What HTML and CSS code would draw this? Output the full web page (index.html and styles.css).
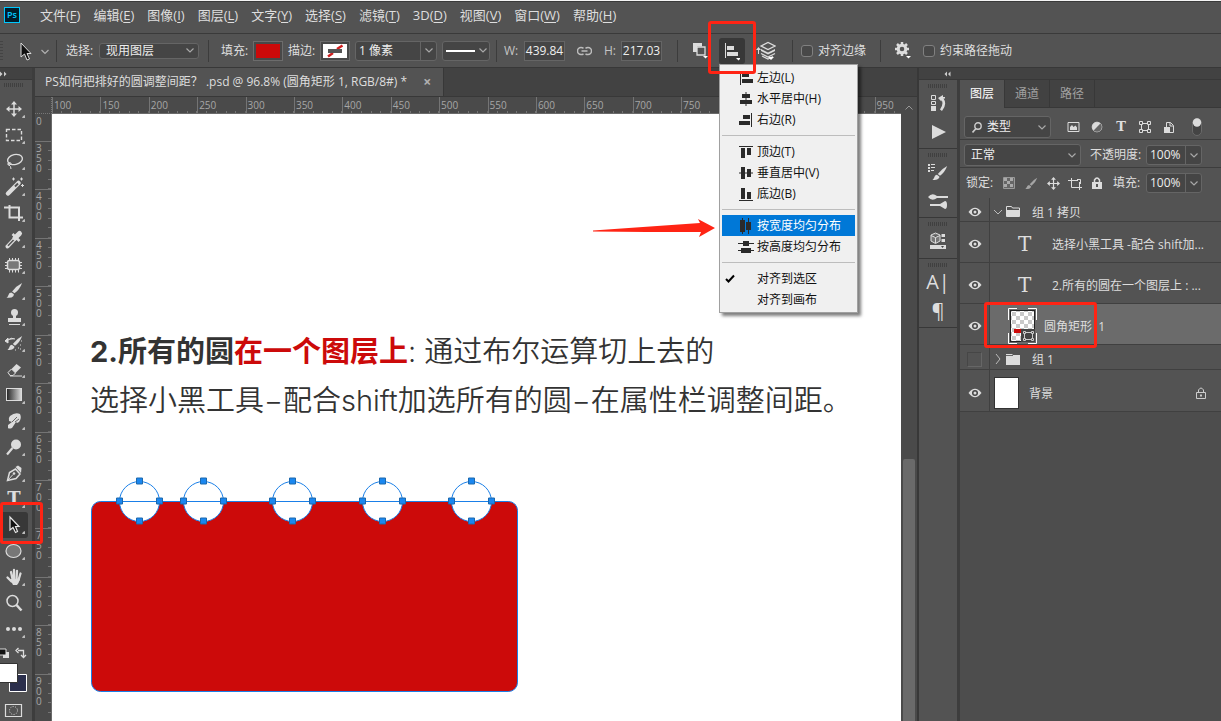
FILE: index.html
```html
<!DOCTYPE html>
<html lang="zh-CN">
<head>
<meta charset="utf-8">
<title>PS如何把排好的圆调整间距?.psd</title>
<link rel="stylesheet" href="styles.css">
</head>
<body>
<svg class="defs" aria-hidden="true">
  <symbol id="eye" viewBox="0 0 14 10"><path d="M.5 5Q7-3.400 13.500 5Q7 13.400 .5 5Z" fill="#dcdcdc"/><circle cx="7" cy="5" r="3" fill="#454545"/><circle cx="7" cy="5" r="1.500" fill="#dcdcdc"/></symbol>
  <symbol id="move" viewBox="0 0 16 16"><path d="M8 2.500V13.500M2.500 8H13.500" stroke="#dcdcdc" stroke-width="1.500"/><path d="M8 0L11 3.500H5ZM8 16L5 12.500H11ZM0 8L3.500 5V11ZM16 8L12.500 11V5Z" fill="#dcdcdc"/></symbol>
  <symbol id="brush" viewBox="0 0 18 18"><path d="M17 1Q11 4 6.500 10L9 12Q14.500 8 17 1Z" fill="#dcdcdc"/><path d="M5.500 11Q3 11.300 2.500 14Q2 15.800 .5 16.500Q5.500 17.500 7.700 15Q8.600 14 8.200 12.800Z" fill="#dcdcdc"/></symbol>
  <symbol id="chev" viewBox="0 0 8 5"><path d="M.5.5L4 4L7.500.5" fill="none" stroke="#a8a8a8" stroke-width="1.200"/></symbol>
</svg>
<div class="app">
  <nav class="menubar">
    <span class="logo">Ps</span>
    <button>文件(<u>F</u>)</button><button>编辑(<u>E</u>)</button><button>图像(<u>I</u>)</button><button>图层(<u>L</u>)</button><button>文字(<u>Y</u>)</button><button>选择(<u>S</u>)</button><button>滤镜(<u>T</u>)</button><button>3D(<u>D</u>)</button><button>视图(<u>V</u>)</button><button>窗口(<u>W</u>)</button><button>帮助(<u>H</u>)</button>
  </nav>

  <header class="options">
    <div class="group g-tool">
      <span class="vgrip"></span>
      <button class="icon" aria-label="路径选择工具"><svg width="32" height="20" viewBox="0 0 32 20"><path d="M3 2V16L6.500 13L9 19L11.500 18L9 12.500H13Z" fill="#111" stroke="#dcdcdc"/><path d="M23.500 9L27 12.500L30.500 9" fill="none" stroke="#b0b0b0" stroke-width="1.200"/></svg></button>
    </div>
    <div class="group g-select">
      <label for="scope">选择:</label>
      <select id="scope" class="box scope"><option>现用图层</option></select>
    </div>
    <div class="group g-style">
      <label for="fill">填充:</label>
      <button id="fill" class="swatch"><span class="red"></span></button>
      <label for="stroke">描边:</label>
      <button id="stroke" class="swatch"><svg width="24" height="14" viewBox="0 0 24 14"><path d="M0 0H24V14H0Z" fill="#fff"/><path d="M5 12.500L10 9M14 5L19.500 1.500" stroke="#d11f1f" stroke-width="2.500"/><path d="M5 5H19V9H5Z" fill="#555"/></svg></button>
      <span class="combo w-stroke"><input aria-label="描边宽度" value="1 像素"><button aria-label="展开描边宽度"><svg width="8" height="5"><use href="#chev"/></svg></button></span>
      <button class="box linekind" aria-label="描边类型"><i></i><svg width="8" height="5"><use href="#chev"/></svg></button>
    </div>
    <div class="group g-size">
      <label class="wl" for="w">W:</label><input id="w" class="num" value="439.84">
      <button class="icon link" aria-label="链接宽高"><svg width="15" height="10" viewBox="0 0 15 10"><path d="M6.500 7.800Q5.500 8.500 4 8.500A3.500 3.500 0 0 1 4 1.500Q5.500 1.500 6.500 2.300M8.500 2.300Q9.500 1.500 11 1.500A3.500 3.500 0 0 1 11 8.500Q9.500 8.500 8.500 7.800M4.500 5H10.500" fill="none" stroke="#bdbdbd" stroke-width="1.500"/></svg></button>
      <label class="hl" for="h">H:</label><input id="h" class="num" value="217.03">
    </div>
    <div class="group g-path">
      <button class="icon" aria-label="路径操作"><svg width="16" height="17" viewBox="0 0 16 17"><path d="M1 1H10V4H4V10H1Z" fill="#dcdcdc"/><path d="M5 5H13V13H5Z" fill="#535353" stroke="#dcdcdc" stroke-width="1.300"/><path d="M1 1H10V4.500H5V10H1Z" fill="#dcdcdc"/><path d="M11 14H16L13.500 16.500Z" fill="#fff"/></svg></button>
      <span class="anchor">
        <button class="icon align-btn" aria-label="路径对齐方式"><svg width="16" height="20" viewBox="0 0 16 20"><path d="M1.500 2V17" stroke="#dcdcdc"/><path d="M3 5H10V9H3ZM3 11H14V15H3Z" fill="#dcdcdc"/><path d="M12 17H17L14.500 19.500Z" fill="#fff"/></svg></button>
        <span class="mark mark-align"></span>
      </span>
      <button class="icon" aria-label="路径排列方式"><svg width="20" height="20" viewBox="0 0 20 20"><path d="M0 9L2.500 6L5 9ZM2 8H3V13H2Z" fill="#dcdcdc"/><path d="M5 5L12 1.500L19 5L12 8.500Z" fill="none" stroke="#dcdcdc" stroke-width="1.300"/><path d="M5 8L12 11.500L19 8V10L12 13.500L5 10Z" fill="#dcdcdc"/><path d="M5 12.500L12 16L19 12.500M6 15L12 18L17 15.500" fill="none" stroke="#dcdcdc" stroke-width="1.200"/><path d="M12 16H18L15 19Z" fill="#fff"/></svg></button>
    </div>
    <div class="group g-edge">
      <input type="checkbox" id="edge"><label for="edge">对齐边缘</label>
    </div>
    <div class="group g-last">
      <button class="icon" aria-label="其他选项"><svg width="16" height="17" viewBox="0 0 16 17"><circle cx="7" cy="7" r="3.800" fill="none" stroke="#dcdcdc" stroke-width="3"/><path d="M7 0V3M7 11V14M0 7H3M11 7H14M2 2L4 4M10 10L12 12M12 2L10 4M4 10L2 12" stroke="#dcdcdc" stroke-width="2.500"/><path d="M11 14H16L13.500 16.500Z" fill="#fff"/></svg></button>
      <input type="checkbox" id="drag"><label for="drag">约束路径拖动</label>
    </div>
  </header>

  <div class="workspace">
    <aside class="toolbar">
      <div class="dock-head"><svg width="7" height="6" viewBox="0 0 7 6"><path d="M0 .5L2.500 3L0 5.500ZM4 .5L6.500 3L4 5.500Z" fill="#ccc"/></svg></div>
      <div class="grip"></div>
      <div class="tools">
        <button class="tool" aria-label="移动"><svg viewBox="0 0 28 26"><use href="#move" x="6" y="5" width="16" height="16"/></svg></button>
        <button class="tool" aria-label="矩形选框"><svg viewBox="0 0 28 26"><path d="M6.500 7.500H21.500V18.500H6.500Z" fill="none" stroke="#dcdcdc" stroke-width="1.400" stroke-dasharray="3.500 2"/></svg></button>
        <button class="tool" aria-label="套索"><svg viewBox="0 0 28 26"><ellipse cx="15" cy="11.500" rx="7.500" ry="5" transform="rotate(-12 15 11.500)" fill="none" stroke="#dcdcdc" stroke-width="1.400"/><path d="M8 15Q7 18 10 17Q12.500 15.500 10 14.500Q7.500 14.500 9 17Q11 18 11 21" fill="none" stroke="#dcdcdc"/></svg></button>
        <button class="tool" aria-label="魔棒"><svg viewBox="0 0 28 26"><path d="M8 19.500L18.500 9" stroke="#dcdcdc" stroke-width="4.500" stroke-linecap="round"/><path d="M15 12.500L18 9.500" stroke="#535353" stroke-width="2"/><path d="M13.500 3.500V6.500M12 5H15M21.500 3.500V6.500M20 5H23M22.500 10V13M21 11.500H24" stroke="#dcdcdc"/></svg></button>
        <button class="tool" aria-label="裁剪"><svg viewBox="0 0 28 26"><path d="M4 7.500H19V17M9.500 5V17.500H23M19 17V21" fill="none" stroke="#dcdcdc" stroke-width="2"/></svg></button>
        <button class="tool" aria-label="吸管"><svg viewBox="0 0 28 26"><path d="M7.500 20.500L15 12.500" stroke="#dcdcdc" stroke-width="4" stroke-linecap="round"/><path d="M8 19.800L15 12.500" stroke="#535353" stroke-width="1.500"/><path d="M12.500 8L19.500 15" stroke="#dcdcdc" stroke-width="2.500"/><path d="M15 12L19.500 7.500" stroke="#dcdcdc" stroke-width="5" stroke-linecap="round"/></svg></button>
        <button class="tool" aria-label="修补"><svg viewBox="0 0 28 26"><rect x="7.500" y="8.500" width="12" height="9" rx="2" fill="#777" stroke="#dcdcdc" stroke-width="1.500"/><path d="M9.500 6V8M12.500 6V8M15.500 6V8M18.500 6V8M9.500 18V20.500M12.500 18V20.500M15.500 18V20.500M18.500 18V20.500M5 10.500H7M5 13.500H7M5 16.500H7M20 10.500H22M20 13.500H22M20 16.500H22" stroke="#dcdcdc"/></svg></button>
        <button class="tool" aria-label="画笔"><svg viewBox="0 0 28 26"><use href="#brush" x="6" y="4" width="17" height="17"/></svg></button>
        <button class="tool" aria-label="仿制图章"><svg viewBox="0 0 28 26"><circle cx="14.500" cy="8.500" r="3.500" fill="#dcdcdc"/><path d="M13 10H16V14H21V18H8V14H13Z" fill="#dcdcdc"/><path d="M9 20H20V21H9Z" fill="#dcdcdc"/></svg></button>
        <button class="tool" aria-label="历史记录画笔"><svg viewBox="0 0 28 26"><use href="#brush" x="7" y="5" width="16" height="16"/><path d="M5 11L8 8V13ZM8 10Q11 7 15 9" fill="#dcdcdc" stroke="#dcdcdc"/><path d="M18 18H19M20 15H21M15 20H16M20 19H21M21 11H22" stroke="#dcdcdc"/></svg></button>
        <button class="tool" aria-label="橡皮擦"><svg viewBox="0 0 28 26"><path d="M8 16.500L16.500 8L21 11.500L13 19.500H10Z" fill="#dcdcdc"/><path d="M8 16.500L11.500 13L15.500 17L13 19.500H10Z" fill="#535353" stroke="#dcdcdc"/><path d="M10 20H22" stroke="#dcdcdc"/></svg></button>
        <button class="tool" aria-label="渐变"><svg viewBox="0 0 28 26"><defs><linearGradient id="grad"><stop stop-color="#222"/><stop offset="1" stop-color="#ddd"/></linearGradient></defs><rect x="6.500" y="6.500" width="15" height="12" fill="url(#grad)" stroke="#dcdcdc"/></svg></button>
        <button class="tool" aria-label="涂抹"><svg viewBox="0 0 28 26"><path d="M8 20V17L12 14L9 13Q8 10 10 8Q15 4 20 6Q22 10 19 14L17 15L16 14L12 20Q9 21 8 20Z" fill="#dcdcdc"/><path d="M12 14L17 9M15 14L19 11" stroke="#666"/></svg></button>
        <button class="tool" aria-label="减淡"><svg viewBox="0 0 28 26"><circle cx="16" cy="10.500" r="5" fill="#dcdcdc"/><path d="M12.500 14L7 20.500" stroke="#dcdcdc" stroke-width="2.200"/></svg></button>
        <button class="tool" aria-label="钢笔"><svg viewBox="0 0 28 26"><path d="M7.500 20.500L9.500 12.500L15.500 9L20 14L16 18.500Z" fill="none" stroke="#dcdcdc" stroke-width="1.500"/><path d="M15.500 7L21 13L21.500 8L18 5.500Z" fill="#dcdcdc"/><path d="M8 20L13 14.500" stroke="#dcdcdc"/><circle cx="14" cy="13.500" r="1.300" fill="#dcdcdc"/></svg></button>
        <button class="tool type" aria-label="文字">T</button>
        <span class="anchor">
          <button class="tool active" aria-label="路径选择"><svg viewBox="0 0 28 26"><path d="M10 5V18L13 15.500L15.500 20.500L17.500 19.500L15.500 14.500H19Z" fill="#111" stroke="#e6e6e6" stroke-width="1.200"/></svg></button>
          <span class="mark mark-tool"></span>
        </span>
        <button class="tool" aria-label="椭圆"><svg viewBox="0 0 28 26"><ellipse cx="13.500" cy="13" rx="7.500" ry="6.500" fill="#777" stroke="#dcdcdc" stroke-width="1.200"/></svg></button>
        <button class="tool" aria-label="抓手"><svg viewBox="0 0 28 26"><path d="M7.500 13.500L11.500 17.500M11 8L12.500 15M14 6V15M17 7L16.500 15M20.500 9.500L18.500 16" stroke="#dcdcdc" stroke-width="2.300" stroke-linecap="round"/><path d="M10 15H20L18.500 19L17 21H13Z" fill="#dcdcdc"/></svg></button>
        <button class="tool plain" aria-label="缩放"><svg viewBox="0 0 28 26"><circle cx="12.500" cy="11" r="5.500" fill="none" stroke="#dcdcdc" stroke-width="1.500"/><path d="M16.500 15L21.500 20.500" stroke="#dcdcdc" stroke-width="2.500"/></svg></button>
        <button class="tool" aria-label="编辑工具栏"><svg viewBox="0 0 28 26"><circle cx="8" cy="13" r="2" fill="#dcdcdc"/><circle cx="14" cy="13" r="2" fill="#dcdcdc"/><circle cx="20" cy="13" r="2" fill="#dcdcdc"/></svg></button>
      </div>
      <svg class="colors" width="32" height="79" viewBox="0 0 32 79"><path d="M3 10H9V16H3Z" fill="#dcdcdc"/><path d="M-1 7H6V13H-1Z" fill="#111" stroke="#dcdcdc"/><path d="M18 8.500H23.500V15M18.500 6L16 8.500L18.500 11M21 13L23.500 15.500L26 13" fill="none" stroke="#dcdcdc" stroke-width="1.300"/><path d="M9.500 32.500H26.500V49.500H9.500Z" fill="#2b2f4c" stroke="#fff"/><path d="M-1 21.500H17.500V40.500H-1Z" fill="#fff" stroke="#333"/><path d="M5.500 62.500H21.500V74.500H5.500Z" fill="none" stroke="#dcdcdc" stroke-width="1.200"/><circle cx="13.500" cy="68.500" r="4" fill="none" stroke="#dcdcdc" stroke-dasharray="1 1.500"/></svg>
    </aside>

    <main class="document">
      <div class="tabbar"><div class="doctab"><span>PS如何把排好的圆调整间距&#xFF1F; .psd @ 96.8% (圆角矩形 1, RGB/8#) *</span><button aria-label="关闭">×</button></div></div>
      <div class="stage">
        <div class="corner"></div>
        <div class="hruler"><div class="hscale"><span>100</span><span>150</span><span>200</span><span>250</span><span>300</span><span>350</span><span>400</span><span>450</span><span>500</span><span>550</span><span>600</span><span>650</span><span>700</span><span>750</span><span></span><span></span><span></span><span>950</span></div></div>
        <div class="scroll"><svg width="8" height="5" viewBox="0 0 8 5"><path d="M.5 4.500L4 1L7.500 4.500" fill="none" stroke="#999"/></svg><div class="thumb"></div></div>
        <div class="vruler"><div class="vfirst">0</div><div class="vscale"><span>350</span><span>400</span><span>450</span><span>500</span><span>550</span><span>600</span><span>650</span><span>700</span><span>750</span><span>800</span><span>850</span><span>900</span></div></div>
        <div class="canvas">
          <p><b>2.所有的圆<em>在一个图层上</em></b>: 通过布尔运算切上去的</p>
          <p>选择小黑工具&#x2212;配合shift加选所有的圆&#x2212;在属性栏调整间距。</p>
          <svg class="art" width="430" height="216" viewBox="90 477 430 216">
            <defs>
              <g id="ring"><circle r="20" fill="#fff" stroke="#1a7fe8"/><path d="M-20 0H20" stroke="#1a7fe8"/><path d="M-3-23.500H3V-17.500H-3ZM-3 16.500H3V22.500H-3ZM-23-3.500H-17V2.500H-23ZM17-3.500H23V2.500H17Z" fill="#1a87f0" stroke="#1d68ac"/></g>
            </defs>
            <rect x="91.500" y="501.500" width="426" height="190" rx="9" fill="#cc0a0a" stroke="#1a7fe8"/>
            <use href="#ring" x="139.500" y="501.500"/><use href="#ring" x="203.500" y="501.500"/><use href="#ring" x="292.500" y="501.500"/><use href="#ring" x="382.500" y="501.500"/><use href="#ring" x="471.500" y="501.500"/>
          </svg>
        </div>
      </div>
    </main>

    <aside class="dock">
      <div class="dock-head right"><svg width="7" height="6" viewBox="0 0 7 6"><path d="M3 .5L.5 3L3 5.500ZM6.500 .5L4 3L6.500 5.500Z" fill="#ccc"/></svg></div>
      <div class="dock-body">
        <div class="strip">
          <div class="set"><div class="grip"></div>
            <button aria-label="历史记录"><svg width="18" height="18" viewBox="0 0 18 18"><path d="M2.500 1.500H6.500V5.500H2.500ZM2.500 7.500H6.500V10.500H2.500Z" fill="none" stroke="#dcdcdc"/><path d="M2 12H7V17H2Z" fill="#dcdcdc"/><path d="M9 4L14 1V3H16V4.500H14.500Q18.500 10 13 17L11 15.500Q15 10 12.500 6V7.500Z" fill="#dcdcdc"/></svg></button>
            <button aria-label="动作"><svg width="16" height="16" viewBox="0 0 16 16"><path d="M2 1L16 8L2 15Z" fill="#dcdcdc"/></svg></button></div>
          <div class="set"><div class="grip"></div>
            <button aria-label="画笔设置"><svg width="22" height="18" viewBox="0 0 22 18"><use href="#brush" x="5" y="2" width="16" height="16"/><path d="M1 1H3V3H1ZM4 1H8V2H4ZM1 4H3V6H1ZM4 4H8V5H4ZM1 7H3V9H1ZM4 7H7V8H4Z" fill="#dcdcdc"/></svg></button>
            <button aria-label="画笔"><svg width="22" height="18" viewBox="0 0 22 18"><path d="M1 5Q5 0 10 4V6Q5 10 1 5ZM10 4H21V6H10ZM3 12H14V14H3ZM13 12L18 9Q20 9 20 13Q20 17 18 17L13 14Z" fill="#dcdcdc"/></svg></button></div>
          <div class="set"><div class="grip"></div>
            <button aria-label="库"><svg width="18" height="18" viewBox="0 0 18 18"><path d="M6.500 1L11 3V9L6.500 11.500L2 9V3ZM2 3.500L6.500 5.500L11 3.500M6.500 5.500V11" fill="#777" stroke="#dcdcdc"/><path d="M12.500 2H16V5H12.500ZM12.500 7H16V10H12.500ZM1 13H17V17H1Z" fill="#dcdcdc"/><path d="M12 14H15L13.500 16Z" fill="#444"/></svg></button></div>
          <div class="set"><div class="grip"></div>
            <button class="glyph" aria-label="字符">A|</button>
            <button class="glyph" aria-label="段落">¶</button></div>
        </div>
        <section class="layers">
          <div class="tabs"><button class="on">图层</button><button>通道</button><button>路径</button></div>
          <div class="row filter">
            <span class="kind"><svg width="10" height="11" viewBox="0 0 10 11"><circle cx="6" cy="4" r="3.200" fill="none" stroke="#ccc" stroke-width="1.400"/><path d="M4 6.500L.5 10.500" stroke="#ccc" stroke-width="1.600"/></svg><select class="box" aria-label="筛选类型"><option>类型</option></select></span>
            <div class="icons">
              <button aria-label="像素图层"><svg width="13" height="12" viewBox="0 0 13 12"><path d="M1 1.500H12V10.500H1Z" fill="none" stroke="#dcdcdc"/><path d="M3 9V6L5 4L6.500 6L8.500 4.500L10 6.500V9Z" fill="#dcdcdc"/></svg></button>
              <button aria-label="调整图层"><svg width="12" height="12" viewBox="0 0 12 12"><circle cx="6" cy="6" r="4.800" fill="#dcdcdc" stroke="#dcdcdc"/><path d="M9.400 2.600A4.800 4.800 0 0 1 2.600 9.400Z" fill="#666"/></svg></button>
              <button class="t" aria-label="文字图层">T</button>
              <button aria-label="形状图层"><svg width="12" height="12" viewBox="0 0 12 12"><path d="M2.500 2.500H9.500V9.500H2.500Z" fill="none" stroke="#dcdcdc"/><path d="M.5.5H3.500V3.500H.5ZM8.500.5H11.500V3.500H8.500ZM.5 8.500H3.500V11.500H.5ZM8.500 8.500H11.500V11.500H8.500Z" fill="#535353" stroke="#dcdcdc"/></svg></button>
              <button aria-label="智能对象"><svg width="12" height="13" viewBox="0 0 12 13"><path d="M3.500 6V1.500H7.500L10.500 4.500V11.500H7M7 1.500V5H10" fill="none" stroke="#dcdcdc"/><path d="M1 6H7V12H1Z" fill="#dcdcdc"/></svg></button>
            </div>
            <button class="toggle" aria-label="打开或关闭筛选"><svg width="10" height="18" viewBox="0 0 10 18"><rect x=".5" y=".5" width="9" height="17" rx="4.500" fill="#444" stroke="#6a6a6a"/><circle cx="5" cy="4.500" r="4.200" fill="#dcdcdc"/></svg></button>
          </div>
          <div class="row blend">
            <select class="box mode" aria-label="混合模式"><option>正常</option></select>
            <label for="op">不透明度:</label>
            <span class="combo"><input id="op" value="100%"><button aria-label="调整不透明度"><svg width="8" height="5"><use href="#chev"/></svg></button></span>
          </div>
          <div class="row locks">
            <span class="lock-label">锁定:</span>
            <div class="icons">
              <button aria-label="锁定透明像素"><svg width="12" height="12" viewBox="0 0 12 12"><path d="M.5.500H11.500V11.500H.5Z" fill="#666" stroke="#999"/><path d="M1 1H4V4H1ZM7 1H10V4H7ZM4 4H7V7H4ZM1 7H4V10H1ZM7 7H10V10H7Z" fill="#aaa"/></svg></button>
              <button class="dim" aria-label="锁定图像像素"><svg width="13" height="13"><use href="#brush"/></svg></button>
              <button aria-label="锁定位置"><svg width="13" height="13"><use href="#move"/></svg></button>
              <button aria-label="防止自动嵌套"><svg width="15" height="13" viewBox="0 0 15 13"><path d="M0 3.500H10M3.500 1V10.500H14M11.500 5V13M9 2.500H12.500V7" fill="none" stroke="#dcdcdc"/></svg></button>
              <button aria-label="锁定全部"><svg width="10" height="12" viewBox="0 0 10 12"><path d="M2.500 6V3Q5-1 7.500 3V6" fill="none" stroke="#dcdcdc" stroke-width="1.500"/><path d="M0 5H10V12H0ZM4 7V10H6V7Z" fill="#dcdcdc" fill-rule="evenodd"/></svg></button>
            </div>
            <label for="fo">填充:</label>
            <span class="combo"><input id="fo" value="100%"><button aria-label="调整填充"><svg width="8" height="5"><use href="#chev"/></svg></button></span>
          </div>
          <ul class="list">
            <li class="folder first"><button class="vis" aria-label="可见性"><svg width="14" height="10"><use href="#eye"/></svg></button><div class="cell"><svg width="10" height="6" viewBox="0 0 10 6"><path d="M1 1L5 5L9 1" fill="none" stroke="#bbb"/></svg><svg width="14" height="11" viewBox="0 0 14 11"><path d="M.5 10.500V.5H5.500L6.500 2H13.500V10.500Z" fill="none" stroke="#dcdcdc"/><path d="M1 4H13V10H1Z" fill="#dcdcdc"/></svg><span>组 1 拷贝</span></div></li>
            <li class="text"><button class="vis" aria-label="可见性"><svg width="14" height="10"><use href="#eye"/></svg></button><div class="cell"><i>T</i><span>选择小黑工具 -配合 shift加...</span></div></li>
            <li class="text"><button class="vis" aria-label="可见性"><svg width="14" height="10"><use href="#eye"/></svg></button><div class="cell"><i>T</i><span>2.所有的圆在一个图层上 : ...</span></div></li>
            <li class="shape selected"><button class="vis" aria-label="可见性"><svg width="14" height="10"><use href="#eye"/></svg></button><div class="cell"><svg width="29" height="36" viewBox="0 0 29 36"><defs><pattern id="chk" width="8" height="8" patternUnits="userSpaceOnUse"><path d="M0 0H8V8H0Z" fill="#fff"/><path d="M0 0H4V4H0ZM4 4H8V8H4Z" fill="#c9c9c9"/></pattern></defs><path d="M.5 12V.5H9M20 .5H28.500V12M.5 25V35.500H9M20 35.500H28.500V25" fill="none" stroke="#fff"/><rect x="2.500" y="2.500" width="24" height="31" fill="url(#chk)" stroke="#222"/><path d="M6 21H13V25H6Z" fill="#cc0a0a"/><path d="M13 21H27V34H13Z" fill="#444"/><path d="M16.500 24.500H24.500V31.500H16.500Z" fill="none" stroke="#ccc"/><path d="M15.500 23.500H17.500V25.500H15.500ZM23.500 23.500H25.500V25.500H23.500ZM15.500 30.500H17.500V32.500H15.500ZM23.500 30.500H25.500V32.500H23.500Z" fill="#444" stroke="#ccc"/></svg><span>圆角矩形  1</span></div><span class="mark mark-layer"></span></li>
            <li class="folder"><button class="vis off" aria-label="可见性"></button><div class="cell"><svg width="10" height="10" viewBox="0 0 10 10"><path d="M3 0L7 5L3 10" fill="none" stroke="#bbb"/></svg><svg width="14" height="11" viewBox="0 0 14 11"><path d="M0 0H6L7 1H14V11H0Z" fill="#dcdcdc"/><path d="M0 1.500H7" stroke="#666"/></svg><span>组 1</span></div></li>
            <li class="back"><button class="vis" aria-label="可见性"><svg width="14" height="10"><use href="#eye"/></svg></button><div class="cell"><i></i><span>背景</span><svg class="lock" width="10" height="12" viewBox="0 0 10 12"><path d="M2.500 5V3Q5-1 7.500 3V5M.5 5.500H9.500V11.500H.5Z" fill="none" stroke="#ccc"/><path d="M4 7.500H6V9.500H4Z" fill="#ccc"/></svg></div></li>
          </ul>
        </section>
      </div>
    </aside>
  </div>

  <div class="popup">
    <button><svg viewBox="0 0 16 16"><path d="M2 1H3V15H2ZM4 3H11V7H4ZM4 9H15V13H4Z"/></svg>左边(L)</button>
    <button><svg viewBox="0 0 16 16"><path d="M7.500 1H8.500V15H7.500ZM4 3H12V7H4ZM2 9H14V13H2Z"/></svg>水平居中(H)</button>
    <button><svg viewBox="0 0 16 16"><path d="M13 1H14V15H13ZM5 3H12V7H5ZM1 9H12V13H1Z"/></svg>右边(R)</button>
    <hr>
    <button><svg viewBox="0 0 16 16"><path d="M1 2H15V3H1ZM3 4H7V14H3ZM9 4H13V11H9Z"/></svg>顶边(T)</button>
    <button><svg viewBox="0 0 16 16"><path d="M1 7.500H15V8.500H1ZM3 2H7V14H3ZM9 4H13V12H9Z"/></svg>垂直居中(V)</button>
    <button><svg viewBox="0 0 16 16"><path d="M1 14H15V15H1ZM3 2H7V13H3ZM9 6H13V13H9Z"/></svg>底边(B)</button>
    <hr>
    <button class="hot"><svg viewBox="0 0 16 16"><path d="M4 0H5V16H4ZM10 0H11V16H10ZM2 2H7V14H2ZM8 4H13V12H8Z"/></svg>按宽度均匀分布</button>
    <button><svg viewBox="0 0 16 16"><path d="M0 4H16V5H0ZM0 11H16V12H0ZM5 2H11V7H5ZM3 9H13V14H3Z"/></svg>按高度均匀分布</button>
    <hr>
    <button class="checked"><svg class="tick" viewBox="0 0 10 9"><path d="M1 5L3.500 7.500L9 1.500" fill="none" stroke="#000" stroke-width="2"/></svg>对齐到选区</button>
    <button class="bare">对齐到画布</button>
    <svg class="arrow" width="124" height="20" viewBox="0 0 124 20"><path d="M1 11.500L108 4L106 0L123 9L107 18L109 13L55 13L1 12.500Z" fill="#ff2414"/></svg>
  </div>
</div>
</body>
</html>
```

FILE: styles.css
```css
* { box-sizing: border-box; }
body {
  margin: 0;
  background: #535353;
  color: #dedede;
  font: 12px/16px "Open Sans", "Noto Sans CJK SC", sans-serif;
}
button, input, select { font: inherit; color: inherit; margin: 0; padding: 0; border: 0; background: none; border-radius: 0; }
button { display: flex; align-items: center; justify-content: center; white-space: nowrap; }
svg { display: block; flex: none; }
label { white-space: nowrap; }
.defs { position: absolute; width: 0; height: 0; }
.app { position: relative; min-height: 100vh; display: flex; flex-direction: column; overflow: hidden; border-top: 1px solid #f4f4f4; }
.anchor { position: relative; display: flex; }
.mark { position: absolute; border: 3px solid #ff2414; border-radius: 3px; pointer-events: none; z-index: 5; }

.menubar { display: flex; align-items: center; gap: 13px; height: 33px; padding: 0 4px 5px; border-top: 1px solid #3a3a3a; border-bottom: 1px solid #3a3a3a; font-size: 13px; }
.menubar u { text-underline-offset: 2px; }
.logo { width: 16px; height: 16px; margin-right: 7px; border: 1px solid #00c8ff; background: #001d2b; color: #00c8ff; font-size: 9px; line-height: 14px; text-align: center; font-weight: 600; }

.options { display: flex; align-items: center; height: 34px; border-bottom: 1px solid #383838; }
.group { display: flex; align-items: center; height: 22px; flex: none; border-left: 1px solid #3c3c3c; }
.g-tool { width: 56px; border: 0; gap: 15px; }
.vgrip { width: 3px; height: 20px; background: repeating-linear-gradient(#444 0 1px, transparent 1px 3px); }
.g-select { width: 152px; padding-left: 9px; gap: 4px; }
.g-select label { width: 29px; }
.g-style label { width: 27px; }
.box { appearance: none; height: 20px; border: 1px solid #656565; border-radius: 3px; background-color: #454545; color: #eee; }
select.box { padding-left: 6px; background-image: url("data:image/svg+xml,%3Csvg xmlns='http://www.w3.org/2000/svg' width='8' height='5'%3E%3Cpath d='M.5.5L4 4L7.5.5' fill='none' stroke='%23a8a8a8' stroke-width='1.2'/%3E%3C/svg%3E"); background-repeat: no-repeat; background-position: right 4px center; }
select.scope { width: 100px; height: 16px; line-height: 14px; }
.g-style { width: 288px; padding-left: 12px; gap: 5px; }
.swatch { width: 30px; height: 20px; flex: none; border: 1px solid #6c6c6c; background: #484848; }
.swatch .red { width: 24px; height: 14px; background: #cc0a0a; }
.combo { display: flex; flex: none; width: 56px; height: 20px; border: 1px solid #656565; border-radius: 3px; background: #454545; color: #eee; }
.combo input { flex: 1; min-width: 0; padding-left: 3px; }
.combo button { width: 16px; border-left: 1px solid #656565; }
.w-stroke { width: 82px; }
.linekind { width: 48px; flex: none; gap: 4px; }
.linekind i { width: 29px; height: 2px; background: #fff; }
.g-size { width: 181px; padding-left: 7px; }
.g-size label { color: #c4c4c4; }
.wl { width: 20px; }
.hl { width: 17px; }
.num { width: 41px; height: 20px; border: 1px solid #656565; background: #454545; color: #eee; text-align: center; }
.link { width: 39px; }
.g-path { width: 115px; padding-left: 14px; gap: 11px; }
.align-btn { width: 26px; height: 26px; border-radius: 3px; background: #383838; }
.mark-align { left: -11px; top: -17px; width: 48px; height: 53px; }
.g-edge { width: 88px; padding-left: 8px; gap: 5px; }
.g-last { padding-left: 14px; }
.g-last input { margin: 0 5px 0 12px; }
input[type="checkbox"] { appearance: none; width: 12px; height: 12px; flex: none; border: 1px solid #808080; border-radius: 3px; background: #484848; }

.workspace { flex: 1; display: flex; }
.toolbar { width: 35px; flex: none; border-right: 3px solid #3d3d3d; }
.dock-head { height: 12px; background: #424242; border-bottom: 1px solid #383838; display: flex; align-items: center; }
.grip { height: 12px; background: repeating-linear-gradient(90deg, #404040 0 1px, transparent 1px 2px) center / 20px 4px no-repeat; }
.toolbar .grip { height: 16px; width: 28px; background-position: center 3px; }
.tools { width: 29px; }
.tool { position: relative; width: 28px; height: 26px; }
.tool svg { width: 28px; height: 26px; }
.tool::after { content: ""; position: absolute; right: 3px; bottom: 4px; border: 1px solid; border-color: transparent #bbb #bbb transparent; border-width: 1px 2px 2px 1px; }
.tool.plain::after { display: none; }
.tool.type { font: 700 18px/26px "DejaVu Serif", serif; }
.tool.active { background: #383838; border-radius: 3px; }
.mark-tool { left: 0; top: -10px; width: 43px; height: 42px; }

.document { flex: 1; min-width: 0; display: flex; flex-direction: column; border-right: 2px solid #383838; }
.tabbar { height: 29px; background: #424242; border-bottom: 1px solid #383838; display: flex; }
.doctab { display: flex; align-items: center; gap: 16px; padding: 0 12px 0 10px; background: #535353; border-right: 1px solid #383838; white-space: nowrap; }
.doctab button { font-size: 14px; font-weight: 700; color: #b0b0b0; }
.stage { flex: 1; display: grid; grid-template: 17px 1fr / 17px 1fr 16px; }
.corner, .hruler, .vruler, .scroll { background: #4a4a4a; color: #a6a6a6; font-size: 10px; }
.corner { border-right: 1px dotted #777; border-bottom: 1px dotted #777; }
.hruler { overflow: hidden; border-bottom: 1px solid #6a6a6a; }
.hscale { width: 871px; height: 16px; display: grid; grid-template-columns: repeat(18, 1fr); }
.hscale span { padding-left: 1px; line-height: 17px; border-left: 1px solid #747474; background: repeating-linear-gradient(90deg, transparent 0 calc(20% - 1px), #747474 calc(20% - 1px) 20%) bottom / 100% 3px no-repeat; }
.vruler { grid-column: 1; overflow: hidden; border-right: 1px solid #6a6a6a; }
.vfirst { height: 27px; padding: 0 1px; line-height: 14px; }
.vscale { height: 581px; display: grid; grid-template-rows: repeat(12, 1fr); }
.vscale span { padding: 1px 8px 0 1px; line-height: 10px; word-break: break-all; border-top: 1px solid #747474; background: repeating-linear-gradient(transparent 0 calc(20% - 1px), #747474 calc(20% - 1px) 20%) right / 3px 100% no-repeat; }
.scroll { grid-column: 3; grid-row: 1 / 3; display: flex; flex-direction: column; align-items: center; padding-top: 8px; }
.thumb { flex: 1; width: 12px; margin-top: 349px; background: #6a6a6a; border-radius: 2px 2px 0 0; }
.canvas { grid-column: 2; grid-row: 2; background: #fff; color: #333; padding: 213px 0 0 38px; overflow: hidden; }
.canvas p { height: 49px; margin: 0; font: 350 29px/49px "Inter", "Noto Sans CJK SC", sans-serif; white-space: nowrap; }
.canvas b { font-weight: 700; }
.canvas em { font-style: normal; color: #cc0a0a; }
.art { margin-top: 52px; }

.dock { width: 302px; flex: none; display: flex; flex-direction: column; }
.right { padding-left: 25px; }
.dock-body { flex: 1; display: flex; }
.strip { width: 41px; border-right: 3px solid #3d3d3d; }
.set { border-bottom: 1px solid #383838; }
.strip button { width: 38px; height: 28px; padding-bottom: 4px; }
.set .grip + button { padding-bottom: 6px; }
.strip .glyph { font: 20px/20px "Open Sans", sans-serif; }
.layers { flex: 1; min-width: 0; background: #4d4d4d; }
.tabs { display: flex; height: 28px; background: #424242; border-bottom: 1px solid #383838; }
.tabs button { width: 45px; border-right: 1px solid #383838; color: #a0a0a0; }
.tabs .on { background: #535353; color: #fff; height: 28px; }
.row { display: flex; align-items: center; padding-left: 4px; background: #535353; border-bottom: 1px solid #3d3d3d; }
.filter { height: 32px; padding-top: 7px; }
.kind { position: relative; }
.kind svg { position: absolute; left: 8px; top: 6px; }
.kind select { width: 87px; height: 22px; padding-left: 22px; }
.icons { display: flex; }
.icons button { width: 24px; height: 20px; }
.filter .icons { padding-left: 10px; }
.icons .t { font: 700 13px/16px "DejaVu Serif", serif; }
.toggle { margin-left: 11px; }
.blend { height: 28px; padding-top: 3px; }
.mode { width: 117px; height: 22px; }
.blend label { width: 56px; margin-left: 9px; }
.locks { height: 30px; border: 0; padding-left: 6px; }
.lock-label { width: 32px; }
.locks .icons button { width: 22px; }
.locks label { margin-left: 5px; width: 33px; }
.dim { opacity: .6; }
.list { margin: 0; padding: 0; list-style: none; }
.list li { position: relative; display: flex; height: 41px; background: #535353; border-bottom: 1px solid #404040; }
.list .folder { height: 25px; }
.list .first { height: 24px; }
.list .back { height: 42px; }
.vis { width: 30px; padding-top: 4px; border-right: 1px solid #404040; }
.off::before { content: ""; width: 13px; height: 13px; border: 1px solid #464646; border-right-color: #666; border-bottom-color: #666; }
.cell { flex: 1; min-width: 0; display: flex; align-items: center; padding-top: 4px; white-space: pre; }
.cell span { padding-top: 2px; }
.folder .cell { padding-left: 3px; gap: 3px; }
.folder span { margin-left: 9px; }
.text i { width: 26px; margin-left: 28px; font: 20px/30px "DejaVu Serif", serif; }
.text span { margin-left: 8px; }
.shape .cell { padding-left: 18px; gap: 7px; }
.selected .cell { background: #6b6b6b; }
.mark-layer { left: 24px; top: -2px; width: 113px; height: 46px; }
.back i { width: 25px; height: 32px; margin: 0 10px 0 4px; background: #fff; border: 1px solid #333; }
.lock { margin: 0 15px 0 auto; }

.popup { position: absolute; left: 719px; top: 63px; width: 139px; padding: 2px; border: 1px solid #a0a0a0; background: #f0f0f0; color: #111; box-shadow: 3px 3px 3px rgba(0,0,0,.5); z-index: 3; }
.popup button { width: 100%; height: 21px; justify-content: flex-start; gap: 3px; padding-left: 16px; }
.popup button svg { width: 16px; height: 16px; fill: #2a2a2a; }
.popup .hot { background: #0078d7; color: #fff; }
.popup .checked { padding-left: 3px; gap: 22px; }
.popup .checked .tick { width: 10px; height: 9px; }
.popup .bare { padding-left: 35px; }
.popup hr { height: 1px; margin: 5px 0; border: 0; background: #bdbdbd; }
.arrow { position: absolute; right: 141px; top: 154px; }
```
